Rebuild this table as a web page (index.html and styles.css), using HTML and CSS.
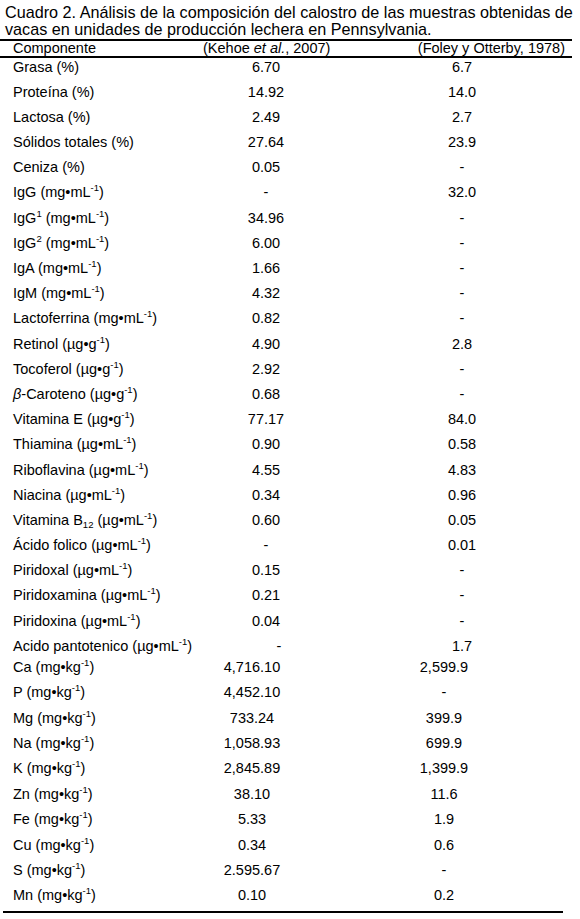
FILE: index.html
```html
<!DOCTYPE html>
<html lang="es">
<head>
<meta charset="utf-8">
<title>Cuadro 2</title>
<link rel="stylesheet" href="styles.css">
</head>
<body>
<div class="page">
  <p class="caption">Cuadro 2. Análisis de la composición del calostro de las muestras obtenidas de<br>vacas en unidades de producción lechera en Pennsylvania.</p>
  <div class="table">
    <div class="head">
      <span class="h-label">Componente</span>
      <span class="h-c1">(Kehoe <i>et al.</i>, 2007)</span>
      <span class="h-c2">(Foley y Otterby, 1978)</span>
    </div>

    <div class="row"><span class="lab">Grasa (%)</span><span class="v1">6.70</span><span class="v2">6.7</span></div>
    <div class="row"><span class="lab">Proteína (%)</span><span class="v1">14.92</span><span class="v2">14.0</span></div>
    <div class="row"><span class="lab">Lactosa (%)</span><span class="v1">2.49</span><span class="v2">2.7</span></div>
    <div class="row"><span class="lab">Sólidos totales (%)</span><span class="v1">27.64</span><span class="v2">23.9</span></div>
    <div class="row"><span class="lab">Ceniza (%)</span><span class="v1">0.05</span><span class="v2">-</span></div>
    <div class="row"><span class="lab">IgG (mg•mL<sup>-1</sup>)</span><span class="v1">-</span><span class="v2">32.0</span></div>
    <div class="row"><span class="lab">IgG<sup>1</sup> (mg•mL<sup>-1</sup>)</span><span class="v1">34.96</span><span class="v2">-</span></div>
    <div class="row"><span class="lab">IgG<sup>2</sup> (mg•mL<sup>-1</sup>)</span><span class="v1">6.00</span><span class="v2">-</span></div>
    <div class="row"><span class="lab">IgA (mg•mL<sup>-1</sup>)</span><span class="v1">1.66</span><span class="v2">-</span></div>
    <div class="row"><span class="lab">IgM (mg•mL<sup>-1</sup>)</span><span class="v1">4.32</span><span class="v2">-</span></div>
    <div class="row"><span class="lab">Lactoferrina (mg•mL<sup>-1</sup>)</span><span class="v1">0.82</span><span class="v2">-</span></div>
    <div class="row"><span class="lab">Retinol (µg•g<sup>-1</sup>)</span><span class="v1">4.90</span><span class="v2">2.8</span></div>
    <div class="row"><span class="lab">Tocoferol (µg•g<sup>-1</sup>)</span><span class="v1">2.92</span><span class="v2">-</span></div>
    <div class="row"><span class="lab"><i>β</i>-Caroteno (µg•g<sup>-1</sup>)</span><span class="v1">0.68</span><span class="v2">-</span></div>
    <div class="row"><span class="lab">Vitamina E (µg•g<sup>-1</sup>)</span><span class="v1">77.17</span><span class="v2">84.0</span></div>
    <div class="row"><span class="lab">Thiamina (µg•mL<sup>-1</sup>)</span><span class="v1">0.90</span><span class="v2">0.58</span></div>
    <div class="row"><span class="lab">Riboflavina (µg•mL<sup>-1</sup>)</span><span class="v1">4.55</span><span class="v2">4.83</span></div>
    <div class="row"><span class="lab">Niacina (µg•mL<sup>-1</sup>)</span><span class="v1">0.34</span><span class="v2">0.96</span></div>
    <div class="row"><span class="lab">Vitamina B<sub>12</sub> (µg•mL<sup>-1</sup>)</span><span class="v1">0.60</span><span class="v2">0.05</span></div>
    <div class="row"><span class="lab">Ácido folico (µg•mL<sup>-1</sup>)</span><span class="v1">-</span><span class="v2">0.01</span></div>
    <div class="row"><span class="lab">Piridoxal (µg•mL<sup>-1</sup>)</span><span class="v1">0.15</span><span class="v2">-</span></div>
    <div class="row"><span class="lab">Piridoxamina (µg•mL<sup>-1</sup>)</span><span class="v1">0.21</span><span class="v2">-</span></div>
    <div class="row"><span class="lab">Piridoxina (µg•mL<sup>-1</sup>)</span><span class="v1">0.04</span><span class="v2">-</span></div>
    <div class="row row-pant"><span class="lab">Acido pantotenico (µg•mL<sup>-1</sup>)</span><span class="v1">-</span><span class="v2">1.7</span></div>

    <div class="row row-min row-ca"><span class="lab">Ca (mg•kg<sup>-1</sup>)</span><span class="v1">4,716.10</span><span class="v2">2,599.9</span></div>
    <div class="row row-min"><span class="lab">P (mg•kg<sup>-1</sup>)</span><span class="v1">4,452.10</span><span class="v2">-</span></div>
    <div class="row row-min"><span class="lab">Mg (mg•kg<sup>-1</sup>)</span><span class="v1">733.24</span><span class="v2">399.9</span></div>
    <div class="row row-min"><span class="lab">Na (mg•kg<sup>-1</sup>)</span><span class="v1">1,058.93</span><span class="v2">699.9</span></div>
    <div class="row row-min"><span class="lab">K (mg•kg<sup>-1</sup>)</span><span class="v1">2,845.89</span><span class="v2">1,399.9</span></div>
    <div class="row row-min"><span class="lab">Zn (mg•kg<sup>-1</sup>)</span><span class="v1">38.10</span><span class="v2">11.6</span></div>
    <div class="row row-min"><span class="lab">Fe (mg•kg<sup>-1</sup>)</span><span class="v1">5.33</span><span class="v2">1.9</span></div>
    <div class="row row-min"><span class="lab">Cu (mg•kg<sup>-1</sup>)</span><span class="v1">0.34</span><span class="v2">0.6</span></div>
    <div class="row row-min"><span class="lab">S (mg•kg<sup>-1</sup>)</span><span class="v1">2.595.67</span><span class="v2">-</span></div>
    <div class="row row-min row-last"><span class="lab">Mn (mg•kg<sup>-1</sup>)</span><span class="v1">0.10</span><span class="v2">0.2</span></div>
  </div>
  <div class="rule"></div>
</div>
</body>
</html>
```

FILE: styles.css
```css
html, body {
  margin: 0;
  padding: 0;
  background: #ffffff;
}

body {
  font-family: "Liberation Sans", Arial, sans-serif;
  font-size: 14.5px;
  color: #000000;
}

.page {
  width: 580px;
}

.caption {
  margin: 0;
  padding: 4px 0 0 5px;
  font-size: 16.2px;
  line-height: 17px;
  white-space: nowrap;
}

.table {
  margin-top: 1px;
  width: 572px;
}

.head {
  display: grid;
  grid-template-columns: 203px 127px 1fr;
  border-top: 2px solid #000;
  border-bottom: 2px solid #000;
  line-height: 15px;
  white-space: nowrap;
}

.h-label {
  padding-left: 13px;
}

.h-c1 {
  text-align: center;
}

.h-c2 {
  text-align: right;
  padding-right: 7px;
}

.row {
  display: grid;
  grid-template-columns: 206px 120px 76px 120px;
  height: 25.2px;
  line-height: 17px;
  padding-top: 0.5px;
  box-sizing: border-box;
  white-space: nowrap;
}

.lab {
  padding-left: 13px;
}

.v1 {
  grid-column: 2;
  text-align: center;
}

.v2 {
  grid-column: 4;
  text-align: center;
}

.row-pant {
  height: 21.4px;
  grid-template-columns: 219px 120px 63px 120px;
}

.row-min {
  grid-template-columns: 192px 120px 72px 120px;
  height: 25.4px;
}

.row-ca {
  height: 25px;
}

.row-last {
  height: 24px;
}

.rule {
  margin-left: 3px;
  width: 560px;
  height: 2px;
  background: #000;
}

sup, sub {
  font-size: 9.5px;
  line-height: 0;
  position: relative;
  vertical-align: baseline;
}

sup {
  top: -6px;
}

sub {
  top: 3px;
}

i {
  font-style: italic;
}
```
